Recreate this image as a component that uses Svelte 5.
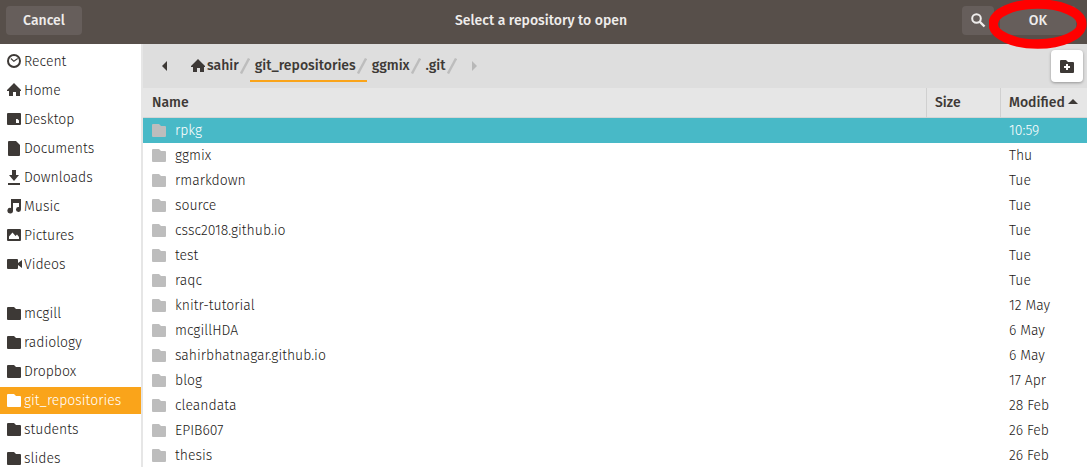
<script>
  const icons = {
    recent: 'M7 0a7 7 0 1 0 0 14A7 7 0 0 0 7 0zm0 2a5 5 0 1 1 0 10A5 5 0 0 1 7 2zM4.2 4.1 3.5 4.9 6.8 8 11 5l-.6-.9L6.9 6.5z',
    home: 'M7 0 0 7v1h2v5h4V9h3v4h4V8h1V7l-2-2z',
    desktop: 'M1 1h12a1 1 0 0 1 1 1v10a1 1 0 0 1-1 1H1a1 1 0 0 1-1-1V2a1 1 0 0 1 1-1zm8 6v4h3V8.500L10.500 7z',
    documents: 'M2 0h7l4 4v10a1 1 0 0 1-1 1H2a1 1 0 0 1-1-1V1a1 1 0 0 1 1-1z',
    downloads: 'M5 0h4v5h3L7 11 2 5h3zM1 13h12v2H1z',
    music: 'M4 0h10v10.500a2.500 2.500 0 1 1-2-2.400V4H6v7.500a2.800 2.800 0 1 1-2-2.600z',
    pictures: 'M1 1h12a1 1 0 0 1 1 1v10a1 1 0 0 1-1 1H1a1 1 0 0 1-1-1V2a1 1 0 0 1 1-1zm1 10h10V9L10 6.500 8.500 8 5.500 4.500 2 8.500z',
    videos: 'M1 2h9a1 1 0 0 1 1 1v3l4-3v8l-4-3v3a1 1 0 0 1-1 1H1a1 1 0 0 1-1-1V3a1 1 0 0 1 1-1z',
    folder: 'M1 1h6l2 2h4a1 1 0 0 1 1 1v9a1 1 0 0 1-1 1H1a1 1 0 0 1-1-1V2a1 1 0 0 1 1-1z'
  };

  const places = [
    ['Recent', 'recent'], ['Home', 'home'], ['Desktop', 'desktop'], ['Documents', 'documents'],
    ['Downloads', 'downloads'], ['Music', 'music'], ['Pictures', 'pictures'], ['Videos', 'videos']
  ];
  const bookmarks = ['mcgill', 'radiology', 'Dropbox', 'git_repositories', 'students', 'slides']
    .map((name) => [name, 'folder']);
  const groups = [places, bookmarks];

  const files = [
    ['rpkg', '10:59'], ['ggmix', 'Thu'], ['rmarkdown', 'Tue'], ['source', 'Tue'],
    ['cssc2018.github.io', 'Tue'], ['test', 'Tue'], ['raqc', 'Tue'], ['knitr-tutorial', '12 May'],
    ['mcgillHDA', '6 May'], ['sahirbhatnagar.github.io', '6 May'], ['blog', '17 Apr'],
    ['cleandata', '28 Feb'], ['EPIB607', '26 Feb'], ['thesis', '26 Feb']
  ];
  const crumbs = ['sahir', 'git_repositories', 'ggmix', '.git'];

  let place = $state('git_repositories');
  let crumb = $state('git_repositories');
  let file = $state('rpkg');
</script>

{#snippet icon(name)}
  <svg class="icon" viewBox="0 0 15 15" aria-hidden="true"><path d={icons[name]} fill="currentColor" fill-rule="evenodd" /></svg>
{/snippet}

<div class="dialog">
  <header>
    <button class="action">Cancel</button>
    <h1>Select a repository to open</h1>
    <div class="end">
      <button class="search" aria-label="Search">
        <svg class="icon" viewBox="0 0 15 15" aria-hidden="true"><circle cx="5.500" cy="5.500" r="4.300" fill="none" stroke="currentColor" stroke-width="2" /><path d="m8.500 8.500 5 5" stroke="currentColor" stroke-width="2.400" /></svg>
      </button>
      <div class="confirm">
        <button class="action">OK</button>
        <svg class="ring" viewBox="0 0 98 50" aria-hidden="true"><ellipse cx="48.500" cy="25" rx="44.300" ry="20" fill="none" stroke="#f00" stroke-width="9.500" /></svg>
      </div>
    </div>
  </header>

  <div class="body">
    <nav>
      {#each groups as group}
        <ul>
          {#each group as [name, glyph]}
            <li><button class="place" class:selected={place === name} onclick={() => (place = name)}>{@render icon(glyph)}{name}</button></li>
          {/each}
        </ul>
      {/each}
    </nav>

    <main>
      <div class="pathbar">
        <button class="arrow" aria-label="Back"><svg viewBox="0 0 5 10" aria-hidden="true"><path d="M5 0v10L0 5z" fill="currentColor" /></svg></button>
        <div class="crumbs">
          {#each crumbs as name, i}
            <button class="crumb" class:current={crumb === name} onclick={() => (crumb = name)}>
              {#if i === 0}{@render icon('home')}{/if}{name}<svg class="slash" viewBox="0 0 10 16" aria-hidden="true"><path d="M1 15.500 9 .5" stroke="#bdbdbd" stroke-width="2.400" /></svg>
            </button>
          {/each}
        </div>
        <button class="arrow forward" aria-label="Forward" disabled><svg viewBox="0 0 5 10" aria-hidden="true"><path d="M0 0v10l5-5z" fill="currentColor" /></svg></button>
        <button class="create" aria-label="Create Folder">
          <svg class="icon" viewBox="0 0 15 15" aria-hidden="true"><path d="M1 1h5l2 2h5a1 1 0 0 1 1 1v9a1 1 0 0 1-1 1H1a1 1 0 0 1-1-1V2a1 1 0 0 1 1-1zm5 4v2H4v2h2v2h2V9h2V7H8V5z" fill="currentColor" fill-rule="evenodd" /></svg>
        </button>
      </div>

      <table>
        <thead>
          <tr>
            <th>Name</th>
            <th class="size">Size</th>
            <th class="modified" aria-sort="ascending">Modified<svg class="sort" viewBox="0 0 10 5" aria-hidden="true"><path d="M0 5h10L5 0z" fill="currentColor" /></svg></th>
          </tr>
        </thead>
        <tbody>
          {#each files as [name, modified]}
            <tr class:selected={file === name} onclick={() => (file = name)}>
              <td><span class="file">{@render icon('folder')}{name}</span></td>
              <td></td>
              <td>{modified}</td>
            </tr>
          {/each}
        </tbody>
      </table>
    </main>
  </div>
</div>

<style>
  :global(body) { margin: 0; }
  .dialog {
    display: flex;
    flex-direction: column;
    height: 100vh;
    overflow: hidden;
    background: #fff;
    color: #3d3936;
    font: 300 14px/20px "Fira Sans", "Noto Sans", sans-serif;
  }
  button { font: inherit; color: inherit; border: 0; padding: 0; background: none; }
  .icon { width: 15px; height: 15px; flex: none; }

  header {
    display: grid;
    grid-template-columns: 1fr auto 1fr;
    align-items: center;
    flex: none;
    height: 44px;
    box-sizing: border-box;
    padding: 0 11px 3px 6px;
    background: #574f4a;
    color: #efedec;
    font-weight: 500;
  }
  h1 { margin: 0; font: inherit; }
  .action, .search { height: 29px; border-radius: 4px; background: #665e5b; }
  .action { width: 76px; }
  .search { display: grid; place-items: center; width: 32px; }
  .end { display: flex; justify-content: flex-end; gap: 6px; }
  .confirm { position: relative; }
  .ring { position: absolute; left: -11px; top: -7px; width: 98px; height: 50px; pointer-events: none; }

  .body { display: flex; flex: 1; min-height: 0; }
  nav { flex: none; width: 141px; padding-top: 4px; border-right: 2px solid #e6e6e6; overflow: hidden; }
  ul { list-style: none; margin: 0 0 22px; padding: 0; display: grid; gap: 2px; }
  .place { display: flex; align-items: center; gap: 2px; width: 100%; height: 27px; padding-left: 7px; color: #1c1917; }
  .place .icon { color: #3d3936; }
  .place.selected, .place.selected .icon { color: #fff; }
  .place.selected { background: #faa41a; }

  main { flex: 1; min-width: 0; overflow: hidden; }
  .pathbar { display: flex; align-items: center; height: 44px; padding: 0 4px 0 19px; background: #dedede; }
  .arrow { display: flex; }
  .arrow svg { width: 5px; height: 10px; }
  .forward { color: #b8b8b8; margin-left: 15px; }
  .crumbs { display: flex; margin-left: 19px; font-weight: 500; }
  .crumb { display: flex; align-items: center; gap: 1px; height: 32px; box-sizing: border-box; padding: 2px 0 0 5px; border-bottom: 2px solid transparent; }
  .crumb.current { border-color: #faa41a; }
  .slash { width: 10px; height: 16px; }
  .create {
    display: grid;
    place-items: center;
    width: 32px;
    height: 32px;
    margin-left: auto;
    border-radius: 4px;
    background: #fff;
    box-shadow: 0 1px 3px #0005;
  }

  table { width: 100%; table-layout: fixed; border-collapse: separate; border-spacing: 0; }
  th { height: 30px; box-sizing: border-box; padding: 0 0 0 9px; background: #e6e6e6; border-bottom: 1px solid #d5d5d5; text-align: left; font-weight: 500; }
  th + th { border-left: 1px solid #d0d0d0; padding-left: 8px; }
  .size { width: 74px; }
  .modified { width: 87px; }
  .sort { width: 10px; height: 5px; margin: 0 0 3px 3px; }
  td { height: 25px; padding: 0 0 0 9px; color: #1c1917; }
  .file { display: flex; align-items: center; gap: 8px; }
  .file .icon { color: #bdbdbd; }
  tr.selected { background: #48b9c7; }
  tr.selected td { color: #fff; }
</style>
